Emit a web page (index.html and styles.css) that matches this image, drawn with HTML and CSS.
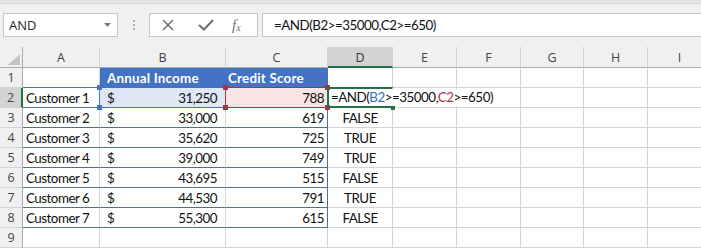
FILE: index.html
```html
<!DOCTYPE html>
<html>
<head>
<meta charset="utf-8">
<link rel="stylesheet" href="styles.css">
</head>
<body>
<div class="app">
  <div class="topstrip"></div>
  <div class="fbar">
    <div class="namebox">
      <span class="nb-text">AND</span>
      <svg class="nb-arrow" width="7" height="4" viewBox="0 0 7 4"><path d="M0 0 L7 0 L3.5 4 Z" fill="#7a7a7a"/></svg>
    </div>
    <div class="grip"><i></i><i></i><i></i></div>
    <div class="fbtns">
      <svg class="ic-x" width="12" height="12" viewBox="0 0 12 12"><path d="M1 1 L11 11 M11 1 L1 11" stroke="#6f6f6f" stroke-width="1.5" fill="none"/></svg>
      <svg class="ic-check" width="16" height="12" viewBox="0 0 16 12"><path d="M1 6 L6 10.5 L15 1" stroke="#6f6f6f" stroke-width="2" fill="none"/></svg>
      <span class="fx">f<sub>x</sub></span>
    </div>
    <div class="finput">=AND(B2&gt;=35000,C2&gt;=650)</div>
  </div>

  <div class="sheet">
    <div class="h corner"><span class="tri"></span></div>
    <div class="h">A</div>
    <div class="h">B</div>
    <div class="h">C</div>
    <div class="h sel">D</div>
    <div class="h">E</div>
    <div class="h">F</div>
    <div class="h">G</div>
    <div class="h">H</div>
    <div class="h">I</div>

    <div class="rh">1</div>
    <div class="c tb"></div>
    <div class="c thead b1">Annual Income</div>
    <div class="c thead c1 tr">Credit Score</div>
    <div class="c"></div><div class="c"></div><div class="c"></div><div class="c"></div><div class="c"></div><div class="c"></div>

    <div class="rh rsel">2</div>
    <div class="c tb">Customer 1</div>
    <div class="c tb money refb"><span>$</span><span>31,250</span><div class="rng blue"><i class="k tl"></i><i class="k tr2"></i><i class="k bl"></i><i class="k br"></i></div></div>
    <div class="c tb num tr refc">788<div class="rng red"><i class="k tl"></i><i class="k tr2"></i><i class="k bl"></i><i class="k br"></i></div></div>
    <div class="c active"><span class="edit">=AND(<span class="fb">B2</span>&gt;=35000,<span class="fr">C2</span>&gt;=650)</span><i class="handle"></i></div>
    <div class="c"></div><div class="c"></div><div class="c"></div><div class="c"></div><div class="c"></div>

    <div class="rh">3</div>
    <div class="c tb">Customer 2</div>
    <div class="c tb money"><span>$</span><span>33,000</span></div>
    <div class="c tb num tr">619</div>
    <div class="c ctr">FALSE</div>
    <div class="c"></div><div class="c"></div><div class="c"></div><div class="c"></div><div class="c"></div>

    <div class="rh">4</div>
    <div class="c tb">Customer 3</div>
    <div class="c tb money"><span>$</span><span>35,620</span></div>
    <div class="c tb num tr">725</div>
    <div class="c ctr">TRUE</div>
    <div class="c"></div><div class="c"></div><div class="c"></div><div class="c"></div><div class="c"></div>

    <div class="rh">5</div>
    <div class="c tb">Customer 4</div>
    <div class="c tb money"><span>$</span><span>39,000</span></div>
    <div class="c tb num tr">749</div>
    <div class="c ctr">TRUE</div>
    <div class="c"></div><div class="c"></div><div class="c"></div><div class="c"></div><div class="c"></div>

    <div class="rh">6</div>
    <div class="c tb">Customer 5</div>
    <div class="c tb money"><span>$</span><span>43,695</span></div>
    <div class="c tb num tr">515</div>
    <div class="c ctr">FALSE</div>
    <div class="c"></div><div class="c"></div><div class="c"></div><div class="c"></div><div class="c"></div>

    <div class="rh">7</div>
    <div class="c tb">Customer 6</div>
    <div class="c tb money"><span>$</span><span>44,530</span></div>
    <div class="c tb num tr">791</div>
    <div class="c ctr">TRUE</div>
    <div class="c"></div><div class="c"></div><div class="c"></div><div class="c"></div><div class="c"></div>

    <div class="rh">8</div>
    <div class="c tb">Customer 7</div>
    <div class="c tb money"><span>$</span><span>55,300</span></div>
    <div class="c tb num tr">615</div>
    <div class="c ctr">FALSE</div>
    <div class="c"></div><div class="c"></div><div class="c"></div><div class="c"></div><div class="c"></div>

    <div class="rh">9</div>
    <div class="c"></div><div class="c"></div><div class="c"></div><div class="c"></div><div class="c"></div><div class="c"></div><div class="c"></div><div class="c"></div><div class="c"></div>
  </div>
</div>
</body>
</html>
```

FILE: styles.css
```css
html, body {
  margin: 0;
  padding: 0;
  overflow: hidden;
  background: #f0f0f0;
}

.app {
  width: 701px;
  height: 248px;
  overflow: hidden;
  font-family: "Lato", "Liberation Sans", sans-serif;
}

.topstrip {
  height: 3px;
  background: #e6e6e6;
  border-bottom: 1px solid #d9d9d9;
}

.fbar {
  display: flex;
  align-items: center;
  padding-top: 9px;
  height: 24px;
}

.namebox {
  box-sizing: border-box;
  margin-left: 3px;
  width: 115px;
  height: 24px;
  background: #fff;
  border: 1px solid #c6c6c6;
  display: flex;
  align-items: center;
  justify-content: space-between;
  padding: 0 6px 0 5px;
}

.nb-text {
  font-family: "Open Sans", "Noto Sans", sans-serif;
  font-size: 13px;
  color: #262626;
}

.grip {
  width: 31px;
  display: flex;
  flex-direction: column;
  align-items: center;
  gap: 2px;
}

.grip i {
  display: block;
  width: 2px;
  height: 2px;
  background: #b4b4b4;
}

.fbtns {
  box-sizing: border-box;
  width: 109px;
  height: 24px;
  background: #fff;
  border: 1px solid #c6c6c6;
  display: flex;
  align-items: center;
  padding-left: 12px;
}

.ic-x { margin-right: 24px; }
.ic-check { margin-right: 18px; }

.fx {
  font-family: "Liberation Serif", serif;
  font-style: italic;
  font-size: 15px;
  color: #6f6f6f;
  line-height: 1;
}

.fx sub {
  font-size: 10px;
  vertical-align: -1px;
}

.finput {
  box-sizing: border-box;
  margin-left: 4px;
  flex: 1;
  height: 24px;
  background: #fff;
  border: 1px solid #c6c6c6;
  border-right: none;
  font-size: 13.4px;
  letter-spacing: -0.5px;
  line-height: 22px;
  padding-left: 11px;
  color: #111;
  white-space: nowrap;
}

.sheet {
  margin-top: 10px;
  display: grid;
  grid-template-columns: 23px 77px 126px 102px 65px 64px 64px 63px 64px 64px;
  grid-template-rows: 21px repeat(9, 20px);
  width: 712px;
  background: #fff;
}

.h {
  background: #f0f0f0;
  border-right: 1px solid #d0d0d0;
  border-bottom: 1px solid #ababab;
  font-family: "Open Sans", "Noto Sans", sans-serif;
  font-size: 12.5px;
  color: #444;
  text-align: center;
  line-height: 21px;
}

.h.sel {
  background: #d3d3d3;
  border-bottom: 2px solid #217346;
  color: #333;
}

.corner {
  position: relative;
  border-right: 1px solid #ababab;
}

.tri {
  position: absolute;
  right: 2px;
  bottom: 2px;
  width: 0;
  height: 0;
  border-left: 12px solid transparent;
  border-bottom: 11px solid #c4c4c4;
}

.rh {
  background: #f0f0f0;
  border-right: 1px solid #ababab;
  border-bottom: 1px solid #d4d4d4;
  font-family: "Open Sans", "Noto Sans", sans-serif;
  font-size: 12.5px;
  color: #444;
  text-align: center;
  line-height: 20px;
}

.rh.rsel {
  background: #d3d3d3;
  border-right: 2px solid #217346;
}

.c {
  box-sizing: border-box;
  border-right: 1px solid #d4d4d4;
  border-bottom: 1px solid #d4d4d4;
  font-size: 13.4px;
  letter-spacing: -0.5px;
  line-height: 20px;
  padding: 0 3px;
  color: #111;
  white-space: nowrap;
}

.c.tb { border-bottom-color: #4f6e9c; }
.c.tr { border-right-color: #4f6e9c; }

.c.thead {
  background: #4472c4;
  color: #fff;
  font-weight: bold;
  letter-spacing: 0.2px;
}

.c.b1 {
  padding-left: 7px;
  border-right-color: #4472c4;
}

.c.c1 { padding-left: 2px; }

.c.money {
  display: flex;
  justify-content: space-between;
  padding: 0 8px 0 7px;
}

.c.num { text-align: right; }
.c.ctr { text-align: center; }

.refb { position: relative; background: #dde7f5; }
.refc { position: relative; background: #f8e3e6; }

.rng {
  position: absolute;
  left: -1px;
  top: -1px;
  right: -1px;
  bottom: -1px;
  border: 1px solid;
  pointer-events: none;
}

.rng.blue { border-color: #4472c4; z-index: 2; }
.rng.red { border-color: #a83443; z-index: 3; }

.k {
  position: absolute;
  width: 5px;
  height: 5px;
}

.blue .k { background: #4472c4; }
.red .k { background: #a83443; }

.k.tl { left: -3px; top: -3px; }
.k.tr2 { right: -3px; top: -3px; }
.k.bl { left: -3px; bottom: -3px; }
.k.br { right: -3px; bottom: -3px; }

.active {
  position: relative;
  z-index: 4;
  border-top: 2px solid #217346;
  border-left: 2px solid #217346;
  border-bottom: 2px solid #217346;
  margin-top: -1px;
  margin-left: -1px;
  line-height: 17px;
  padding-left: 2px;
}

.edit {
  display: inline-block;
  background: #fff;
  padding-right: 4px;
}

.fb { color: #3a6cbf; }
.fr { color: #a83443; }

.handle {
  position: absolute;
  right: -3px;
  bottom: -4px;
  width: 4px;
  height: 4px;
  background: #217346;
}
```
